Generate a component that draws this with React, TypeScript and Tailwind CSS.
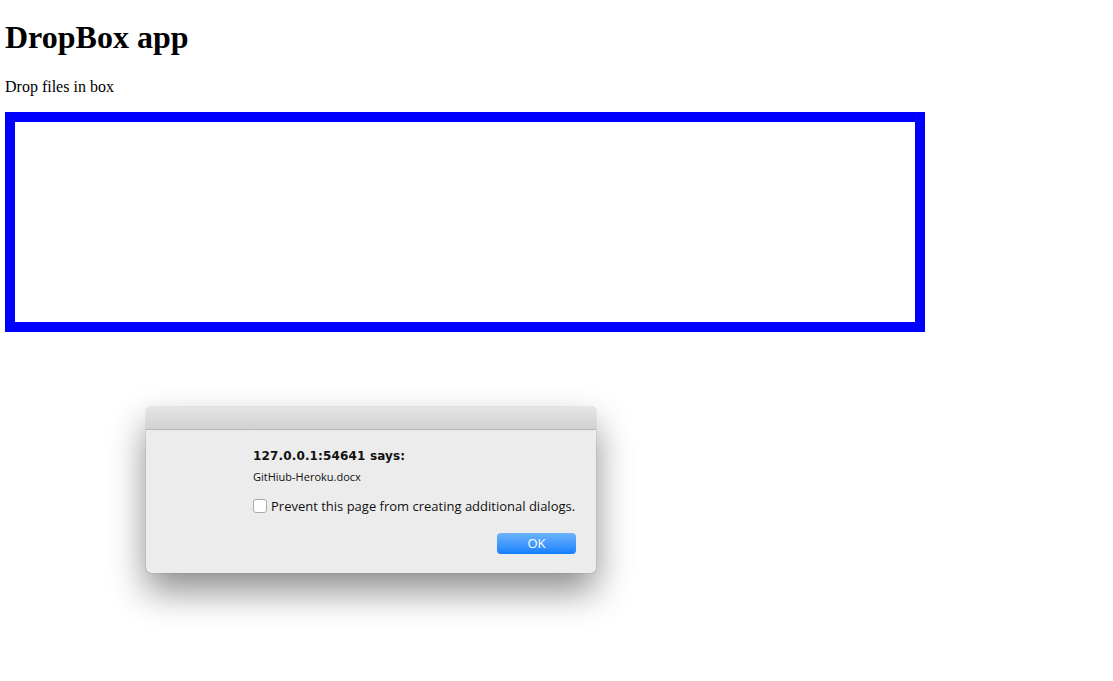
export default function App() {
  return (
    <div className="relative min-h-[681px] bg-white px-[5px] pt-[19px] font-['Liberation_Serif',serif] text-black">
      <h1 className="text-[32px] font-bold leading-[37px]">DropBox app</h1>
      <p className="mt-[22px] text-[16px] leading-[18px]">Drop files in box</p>
      <div className="mt-[16px] h-[220px] w-[920px] border-[10px] border-[#0000ff]" />

      {/* alert dialog */}
      <div className="absolute left-[146px] top-[407px] w-[450px] rounded-[5px] bg-[#ececec] font-['Open_Sans','Liberation_Sans',sans-serif] text-[#111] shadow-[0_18px_36px_rgba(0,0,0,0.45),0_0_1px_rgba(0,0,0,0.5)]">
        <div className="h-[23px] rounded-t-[5px] border-b border-[#b8b7b8] bg-gradient-to-b from-[#e6e5e6] to-[#d3d2d3]" />
        <div className="pl-[107px] pr-[20px] pt-[18px] pb-[19px]">
          <div className="font-['DejaVu_Sans',sans-serif] text-[12px] font-bold leading-[16px] tracking-[0.15px]">127.0.0.1:54641 says:</div>
          <div className="mt-[6px] text-[11px] leading-[14px]">GitHiub-Heroku.docx</div>
          <label className="mt-[14px] flex items-center gap-[4px] text-[13px] leading-[16px]">
            <span className="h-[14px] w-[14px] rounded-[3px] border border-[#a9a9a9] bg-white" />
            <span>Prevent this page from creating additional dialogs.</span>
          </label>
          <div className="mt-[19px] flex justify-end">
            <button className="h-[21px] w-[79px] rounded-[4px] bg-gradient-to-b from-[#6cb3fa] to-[#0d80fe] text-[13px] leading-[21px] text-white">
              OK
            </button>
          </div>
        </div>
      </div>
    </div>
  );
}
